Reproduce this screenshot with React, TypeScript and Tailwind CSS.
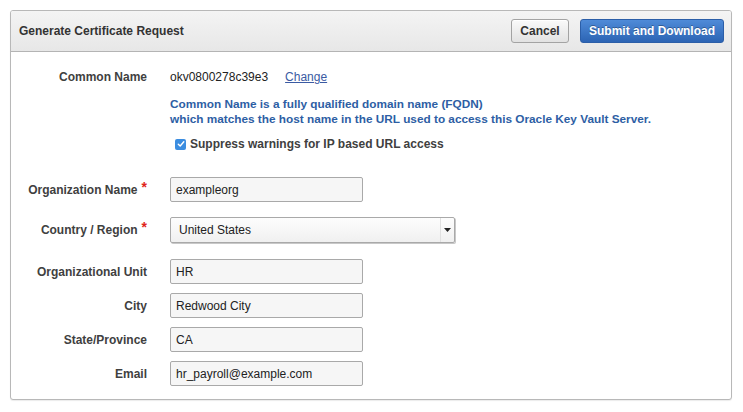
import React from "react";

const font = "font-['Liberation_Sans','Helvetica','Arial',sans-serif]";

function Label({ text, required }: { text: string; required?: boolean }) {
  return (
    <div className="flex w-[136px] shrink-0 items-start justify-end text-[12px] font-bold leading-[14px] text-[#404040]">
      <span>{text}</span>
      {required && <span className="ml-[4px] -mt-[3px] text-[14px] text-[#e0241b]">*</span>}
    </div>
  );
}

function TextField({ label, value, required, className }: { label: string; value: string; required?: boolean; className?: string }) {
  return (
    <div className={`flex items-center ${className ?? ""}`}>
      <Label text={label} required={required} />
      <div className="ml-[23px] flex h-[25px] w-[193px] items-center rounded-[2px] border border-[#a9a9a9] bg-[#f6f6f6] pl-[5px] text-[12px] text-[#222]">
        {value}
      </div>
    </div>
  );
}

export default function App() {
  return (
    <div className={`min-h-screen bg-white px-[10px] pt-[10px] ${font}`}>
      <div className="w-[722px] overflow-hidden rounded-[3px] border border-[#b8b8b8] bg-white shadow-[0_1px_1px_rgba(0,0,0,0.08)]">
        <div className="flex h-[41px] items-center justify-between border-b border-[#b4b4b4] bg-gradient-to-b from-[#f4f4f4] to-[#e7e7e7] pl-[8px] pr-[7px]">
          <h2 className="text-[12px] font-bold text-[#333]">Generate Certificate Request</h2>
          <div className="flex items-center gap-[11px]">
            <button className="h-[24px] w-[58px] rounded-[3px] border border-[#a3a3a3] bg-gradient-to-b from-[#fafafa] to-[#e2e2e2] text-[12px] font-bold text-[#333] shadow-[inset_0_1px_0_#fff]">
              Cancel
            </button>
            <button className="h-[24px] w-[144px] rounded-[3px] border border-[#2b5ea8] bg-gradient-to-b from-[#4f8bd8] to-[#2c64b4] text-[12px] font-bold text-white [text-shadow:0_-1px_0_rgba(0,0,0,0.3)]">
              Submit and Download
            </button>
          </div>
        </div>

        <div className="pb-[13px] pt-[18px]">
          <div className="flex items-center">
            <Label text="Common Name" />
            <div className="ml-[23px] flex items-center text-[12px] leading-[14px] text-[#222]">
              <span>okv0800278c39e3</span>
              <a href="#" className="ml-[17px] text-[#3b5ba3] underline">Change</a>
            </div>
          </div>

          <div className="ml-[159px] mt-[13px] text-[11.8px] font-bold leading-[15px] text-[#2d5ea4]">
            <p>Common Name is a fully qualified domain name (FQDN)</p>
            <p>which matches the host name in the URL used to access this Oracle Key Vault Server.</p>
          </div>

          <div className="ml-[164px] mt-[8px] flex items-center">
            <span className="flex h-[11px] w-[11px] items-center justify-center rounded-[2px] bg-[#3b8de0]">
              <svg width="8" height="8" viewBox="0 0 8 8">
                <path d="M1.3 4.2 3.2 6 6.8 1.8" fill="none" stroke="#fff" strokeWidth="1.4" strokeLinecap="round" strokeLinejoin="round" />
              </svg>
            </span>
            <span className="ml-[4px] text-[12px] font-bold text-[#404040]">Suppress warnings for IP based URL access</span>
          </div>

          <TextField className="mt-[24px]" label="Organization Name" value="exampleorg" required />

          <div className="mt-[15px] flex items-center">
            <Label text="Country / Region" required />
            <div className="ml-[23px] flex h-[26px] w-[285px] items-center justify-between rounded-[2px] border border-[#a9a9a9] bg-gradient-to-b from-[#fdfdfd] to-[#f0f0f0] pl-[8px] text-[12px] text-[#222] shadow-[1px_1px_0_#c8c8c8]">
              <span>United States</span>
              <span className="flex h-full w-[14px] items-center justify-center border-l border-[#e0e0e0]">
                <svg width="7" height="4" viewBox="0 0 7 4">
                  <path d="M0 0h7L3.5 4z" fill="#222" />
                </svg>
              </span>
            </div>
          </div>

          <TextField className="mt-[16px]" label="Organizational Unit" value="HR" />
          <TextField className="mt-[9px]" label="City" value="Redwood City" />
          <TextField className="mt-[9px]" label="State/Province" value="CA" />
          <TextField className="mt-[9px]" label="Email" value="hr_payroll@example.com" />
        </div>
      </div>
    </div>
  );
}
